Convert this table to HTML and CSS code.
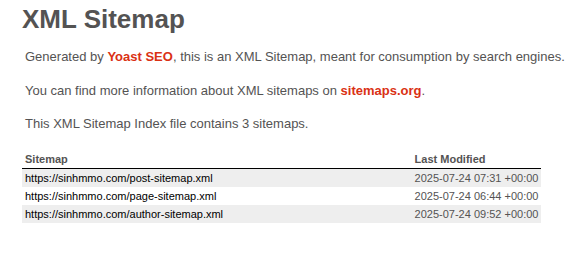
FILE: index.html
```html
<!DOCTYPE html>
<html>
<head>
<meta charset="utf-8">
<title>XML Sitemap</title>
<link rel="stylesheet" href="styles.css">
</head>
<body>
<div class="content">
  <h1 class="title">XML Sitemap</h1>
  <p class="expl">Generated by <a class="expl-link" href="#">Yoast SEO</a>, this is an XML Sitemap, meant for consumption by search engines.</p>
  <p class="expl">You can find more information about XML sitemaps on <a class="expl-link" href="#">sitemaps.org</a>.</p>
  <p class="expl">This XML Sitemap Index file contains 3 sitemaps.</p>
  <table class="sitemap">
    <thead>
      <tr><th class="col-url">Sitemap</th><th class="col-date">Last Modified</th></tr>
    </thead>
    <tbody>
      <tr class="odd"><td><a class="url" href="#">https://sinhmmo.com/post-sitemap.xml</a></td><td>2025-07-24 07:31 +00:00</td></tr>
      <tr><td><a class="url" href="#">https://sinhmmo.com/page-sitemap.xml</a></td><td>2025-07-24 06:44 +00:00</td></tr>
      <tr class="odd"><td><a class="url" href="#">https://sinhmmo.com/author-sitemap.xml</a></td><td>2025-07-24 09:52 +00:00</td></tr>
    </tbody>
  </table>
</div>
</body>
</html>
```

FILE: styles.css
```css
html, body {
  margin: 0;
  padding: 0;
  background: #fff;
}
body {
  font-family: "Liberation Sans", Arial, Helvetica, sans-serif;
  font-size: 13px;
  color: #545353;
}
.content {
  padding: 4px 0 0 22px;
}
.title {
  font-size: 26px;
  font-weight: bold;
  margin: 0;
}
.expl {
  margin: 14px 0 18px 3px;
  line-height: 1.2em;
  white-space: nowrap;
}
.expl-link {
  color: #da3114;
  font-weight: 700;
  text-decoration: none;
}
.sitemap {
  border: none;
  border-collapse: collapse;
}
.sitemap th {
  text-align: left;
  padding: 3px 30px 3px 3px;
  font-size: 11px;
  line-height: 12px;
  border-bottom: 1px solid #000;
}
.col-url { width: 75%; }
.col-date { width: 25%; }
.sitemap td {
  font-size: 11px;
  line-height: 12px;
  padding: 3px;
}
.sitemap .odd td {
  background-color: #eee;
}
.url {
  color: #000;
  text-decoration: none;
}
```
